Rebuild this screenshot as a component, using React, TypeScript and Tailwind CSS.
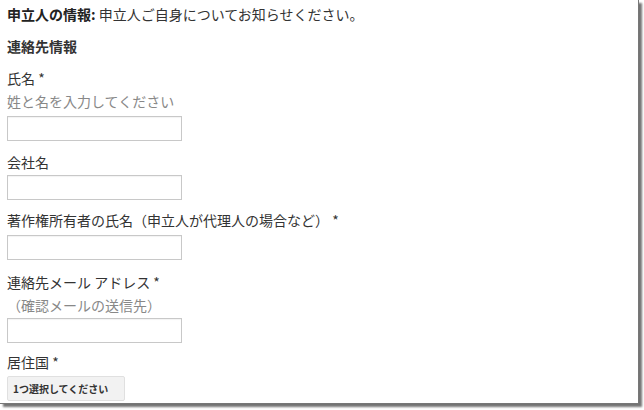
import React from "react";

const font = { fontFamily: '"Noto Sans CJK JP", "Noto Sans", sans-serif' };

function Field({
  label,
  hint,
  top,
  gap,
  children,
}: {
  label: string;
  hint?: string;
  top: string;
  gap: string;
  children: React.ReactNode;
}) {
  return (
    <div className={`flex flex-col ${top}`}>
      <div className="text-[14px] leading-[23px] text-[#333]">{label}</div>
      {hint && <div className="text-[14px] leading-[23px] text-[#888]">{hint}</div>}
      <div className={gap}>{children}</div>
    </div>
  );
}

function Input() {
  return <div className="h-[25px] w-[175px] border border-[#c8c8c8] bg-white shadow-[inset_0_1px_1px_rgba(0,0,0,0.05)]" />;
}

export default function App() {
  return (
    <div className="bg-white w-[644px] h-[410px]" style={font}>
      <div className="w-[639px] h-[404px] bg-white border-r border-b border-[#777] shadow-[3px_3px_2px_rgba(0,0,0,0.55)] pl-[7px] pt-[3px]">
        <div className="text-[14px] leading-[23px] text-[#333]">
          <span className="font-bold text-[#222]">申立人の情報:</span> 申立人ご自身についてお知らせください。
        </div>
        <div className="mt-[9px] text-[14px] leading-[23px] font-bold text-[#333]">連絡先情報</div>
        <Field label="氏名 *" hint="姓と名を入力してください" top="mt-[9px]" gap="mt-[3px]">
          <Input />
        </Field>
        <Field label="会社名" top="mt-[10px]" gap="mt-[1px]">
          <Input />
        </Field>
        <Field label="著作権所有者の氏名（申立人が代理人の場合など） *" top="mt-[9px]" gap="mt-[3px]">
          <Input />
        </Field>
        <Field label="連絡先メール アドレス *" hint="（確認メールの送信先）" top="mt-[11px]" gap="mt-[1px]">
          <Input />
        </Field>
        <Field label="居住国 *" top="mt-[8px]" gap="mt-[2px]">
          <div className="flex h-[25px] w-[118px] items-center rounded-[2px] border border-[#e0e0e0] bg-[#f2f2f2] pl-[5px] text-[10px] font-bold text-[#333]">
            1つ選択してください
          </div>
        </Field>
      </div>
    </div>
  );
}
